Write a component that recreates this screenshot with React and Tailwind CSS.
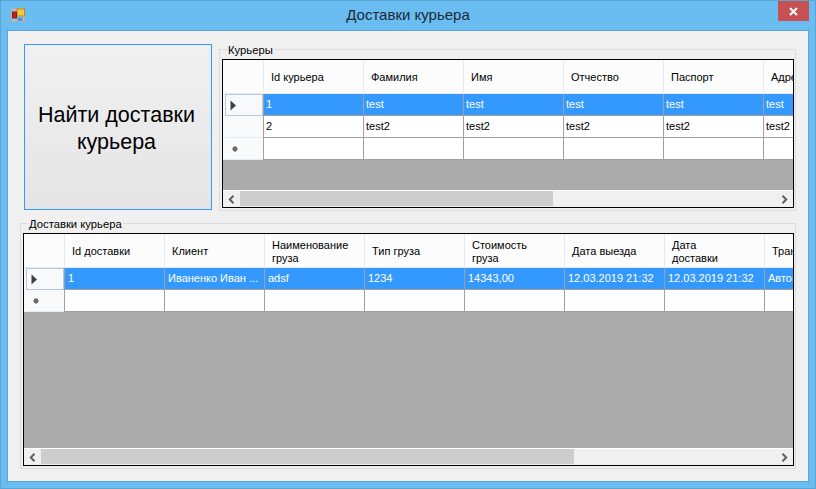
const font = { fontFamily: '"Liberation Sans", Arial, sans-serif' };

function Arrow() {
  return (
    <svg width="7" height="11" viewBox="0 0 7 11" className="block">
      <path d="M0.5 0.5 L6 5.5 L0.5 10.5 Z" fill="#404040" />
    </svg>
  );
}

function NewRow() {
  return (
    <svg width="6" height="6" viewBox="0 0 6 6" className="block">
      <circle cx="3" cy="3" r="2.4" fill="#606060" />
      <path d="M3 0 L3 6 M0 3 L6 3" stroke="#777" strokeWidth="0.8" />
    </svg>
  );
}

function Chevron({ dir }) {
  return (
    <svg width="7" height="9" viewBox="0 0 7 9" className="block">
      <path
        d={dir === "left" ? "M5.5 0.8 L1.8 4.5 L5.5 8.2" : "M1.5 0.8 L5.2 4.5 L1.5 8.2"}
        fill="none"
        stroke="#606060"
        strokeWidth="2"
      />
    </svg>
  );
}

function Scrollbar({ thumb }) {
  return (
    <div className="h-[17px] shrink-0 flex bg-[#f0f0f0] border-t border-t-white">
      <div className="w-[17px] shrink-0 flex items-center justify-center"><Chevron dir="left" /></div>
      <div className="flex-1 min-w-0 flex pb-px">
        <div className="bg-[#cdcdcd]" style={{ width: thumb }} />
      </div>
      <div className="w-[17px] shrink-0 flex items-center justify-center"><Chevron dir="right" /></div>
    </div>
  );
}

function Grid({ columns, rows, thumb, className, cellPad }) {
  return (
    <div className={"border border-black flex flex-col bg-[#ababab] overflow-hidden " + className}>
      <div className="flex-1 min-h-0 overflow-hidden">
        <div className="flex h-[34px] bg-[#fcfcfc] border-b border-b-[#e2ebf5] w-[900px]">
          <div className="w-[41px] shrink-0 border-r border-r-[#e2ebf5]" />
          {columns.map((c) => (
            <div
              key={c}
              className="w-[100px] shrink-0 border-r border-r-[#e2ebf5] pl-[7px] pr-[20px] pt-[2px] flex items-center text-[11px] leading-[13px] text-black"
            >
              {c}
            </div>
          ))}
        </div>
        {rows.map((r, i) => (
          <div key={i} className="flex h-[22px] w-[900px]">
            <div className="w-[41px] shrink-0 pl-[2px] bg-[#f8f9fb] border-r border-r-[#a0a0a0]">
              <div
                className={
                  "h-full flex items-center " +
                  (r.selected
                    ? "border border-[#b9c6d8] pl-[4px]"
                    : "border-b border-b-[#e2ebf5] pl-[7px]")
                }
              >
                {r.selected ? <Arrow /> : r.isNew ? <NewRow /> : null}
              </div>
            </div>
            {columns.map((c, j) => (
              <div
                key={c}
                className={
                  "w-[100px] shrink-0 border-r border-b border-[#a0a0a0] flex items-center text-[11px] whitespace-nowrap overflow-hidden " +
                  cellPad + " " +
                  (r.selected ? "bg-[#3399ff] text-white" : "bg-white text-black")
                }
              >
                {r.cells ? r.cells[j] : ""}
              </div>
            ))}
          </div>
        ))}
      </div>
      <Scrollbar thumb={thumb} />
    </div>
  );
}

function Group({ label, className, children }) {
  return (
    <div className={"relative border border-[#dcdcdc] " + className}>
      <span className="absolute top-[-6px] left-[7px] bg-[#f0f0f0] px-px text-[11.25px] leading-[13px] text-black whitespace-nowrap">
        {label}
      </span>
      {children}
    </div>
  );
}

export default function App() {
  return (
    <div
      className="w-[816px] h-[489px] bg-[#69bdf1] border border-[#5aa5d3] flex flex-col overflow-hidden"
      style={font}
    >
      <div className="relative h-[29px] shrink-0 flex items-center justify-center text-[15px] text-[#1c2a36]">
        Доставки курьера
        <svg width="15" height="15" viewBox="0 0 15 15" className="absolute left-[10px] top-[7px]">
          <rect x="0.5" y="0.5" width="13" height="13" fill="#9fc4dc" stroke="#b9b0a0" />
          <rect x="6" y="1" width="7.5" height="7" fill="#f5c93f" stroke="#b58a1f" />
          <rect x="1.5" y="4" width="4" height="6" fill="#c41f1f" stroke="#8a1a1a" />
          <rect x="6.5" y="9.5" width="5" height="3.5" fill="#5c8fe0" />
        </svg>
        <div className="absolute right-[6px] top-0 w-[31px] h-[20px] bg-[#c75050] flex items-center justify-center">
          <svg width="9" height="9" viewBox="0 0 9 9">
            <path d="M1 1 L8 8 M8 1 L1 8" stroke="#fff" strokeWidth="2" />
          </svg>
        </div>
      </div>

      <div className="ml-[6px] w-[802px] h-[452px] bg-[#f0f0f0] border border-[#5aa5d3] pt-[13px] pl-[12px]">
        <div className="flex items-start pl-[4px]">
          <div className="w-[188px] h-[166px] border border-[#3399ff] bg-gradient-to-b from-[#f0f0f0] to-[#e5e5e5] flex items-center justify-center text-center text-[21.5px] leading-[27px] text-black pt-[4px] pr-[3px]">
            <span>Найти доставки<br />курьера</span>
          </div>
          <Group label="Курьеры" className="ml-[7px] mt-[5px] w-[577px] h-[162px] pt-[9px] pl-[2px] pr-[2px]">
            <Grid
              className="h-[149px] w-[572px]"
              cellPad="pl-[2px]"
              thumb="313px"
              columns={["Id курьера", "Фамилия", "Имя", "Отчество", "Паспорт", "Адрес"]}
              rows={[
                { selected: true, cells: ["1", "test", "test", "test", "test", "test"] },
                { cells: ["2", "test2", "test2", "test2", "test2", "test2"] },
                { isNew: true },
              ]}
            />
          </Group>
        </div>
        <Group label="Доставки курьера" className="mt-[12px] w-[776px] h-[246px] pt-[9px] pl-[2px] pr-[2px]">
          <Grid
            className="h-[233px] w-[771px]"
            cellPad="pl-[3px]"
            thumb="533px"
            columns={["Id доставки", "Клиент", "Наименование груза", "Тип груза", "Стоимость груза", "Дата выезда", "Дата доставки", "Транспорт"]}
            rows={[
              { selected: true, cells: ["1", "Иваненко Иван ...", "adsf", "1234", "14343,00", "12.03.2019 21:32", "12.03.2019 21:32", "Автомобиль"] },
              { isNew: true },
            ]}
          />
        </Group>
      </div>
    </div>
  );
}
